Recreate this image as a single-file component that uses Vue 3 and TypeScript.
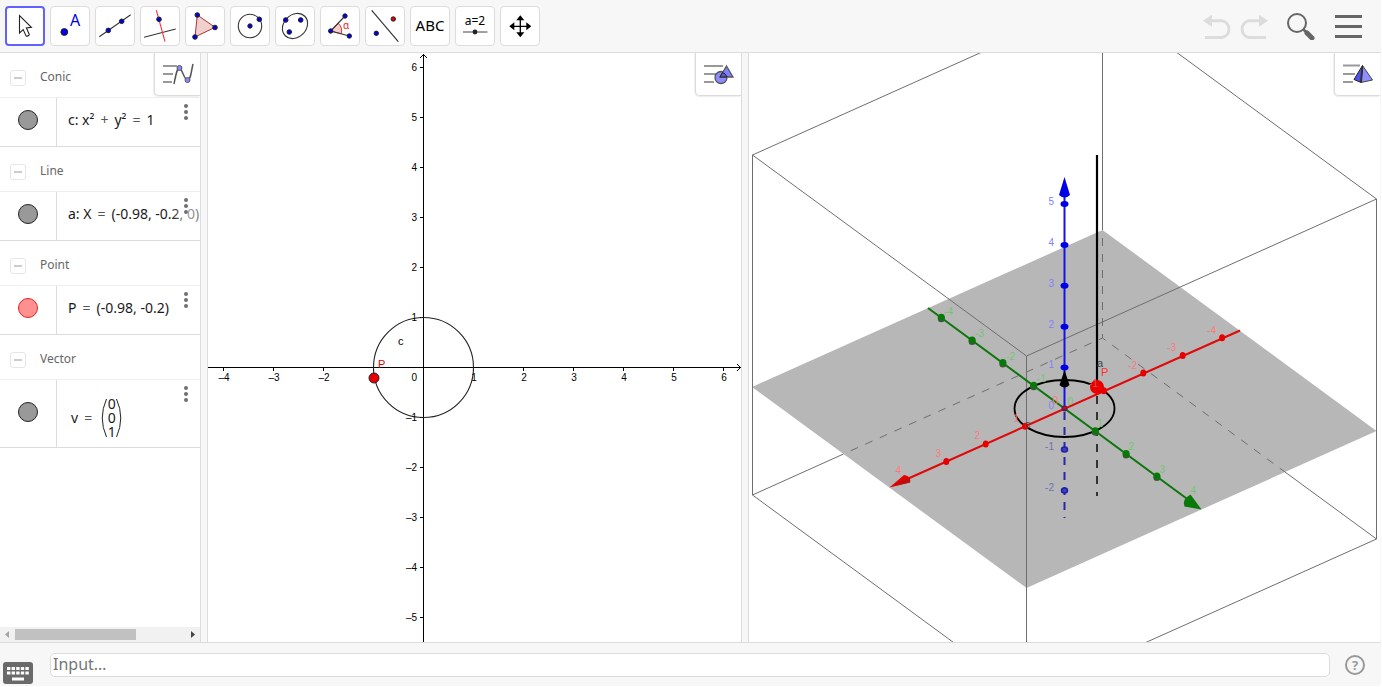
<script setup lang="ts">
import { ref } from 'vue'

interface Item {
  group: string
  kind: 'conic' | 'line' | 'point' | 'vector'
  name: string
  plus?: string
  value: string
}
interface Label {
  x: number
  y: number
  t: string
}
interface Dot {
  x: number
  y: number
}

const tools: string[] = [
  'Move', 'Point', 'Line', 'Perpendicular Line', 'Polygon', 'Circle with Centre',
  'Conic', 'Angle', 'Reflect about Line', 'Text', 'Slider', 'Move Graphics View',
]
const activeTool = ref<string>('Move')
const command = ref<string>('')

const items: Item[] = [
  { group: 'Conic', kind: 'conic', name: 'c: x²', plus: 'y²', value: '1' },
  { group: 'Line', kind: 'line', name: 'a: X', value: '(-0.98, -0.2, 0)' },
  { group: 'Point', kind: 'point', name: 'P', value: '(-0.98, -0.2)' },
  { group: 'Vector', kind: 'vector', name: 'v', value: '' },
]

const unit = 50
const origin: Dot = { x: 423, y: 367 }
const fmt = (n: number): string => (n < 0 ? `–${-n}` : `${n}`)
const xTicks: number[] = [-4, -3, -2, -1, 1, 2, 3, 4, 5, 6]
const yTicks: number[] = [-5, -4, -3, -2, -1, 1, 2, 3, 4, 5, 6]
const xLabels = xTicks.filter((n) => n !== -1)

const centre: Dot = { x: 1064.5, y: 408.5 }
const along = (n: number, dx: number, dy: number): Dot => ({ x: centre.x + n * dx, y: centre.y + n * dy })
const redDots: Dot[] = [-4, -3, -2, -1, 1, 2, 3].map((n) => along(n, -39.4, 17.7))
const greenDots: Dot[] = [-4, -3, -2, -1, 1, 2, 3].map((n) => along(n, 30.8, 22.7))
const blueDots: Dot[] = [1, 2, 3, 4, 5].map((n) => along(n, 0, -40.9))
const lowDots: Dot[] = [-1, -2].map((n) => along(n, 0, -41))

const blueLabels: Label[] = [
  { x: 1054, y: 205, t: '5' }, { x: 1054, y: 246, t: '4' }, { x: 1054, y: 287, t: '3' },
  { x: 1054, y: 328, t: '2' }, { x: 1054, y: 368, t: '1' }, { x: 1054, y: 409, t: '0' },
]
const lowLabels: Label[] = [{ x: 1054, y: 450, t: '-1' }, { x: 1054, y: 491, t: '-2' }]
const redLabels: Label[] = [
  { x: 901, y: 474, t: '4' }, { x: 941, y: 457, t: '3' }, { x: 980, y: 439, t: '2' },
  { x: 1019, y: 422, t: '1' }, { x: 1058, y: 404, t: '0' }, { x: 1137, y: 369, t: '-2' },
  { x: 1176, y: 351, t: '-3' }, { x: 1216, y: 334, t: '-4' },
]
const greenLabels: Label[] = [
  { x: 953, y: 315, t: '-4' }, { x: 984, y: 337, t: '-3' }, { x: 1015, y: 360, t: '-2' },
  { x: 1046, y: 382, t: '-1' }, { x: 1073, y: 405, t: '0' }, { x: 1103, y: 427, t: '1' },
  { x: 1134, y: 450, t: '2' }, { x: 1165, y: 473, t: '3' }, { x: 1196, y: 494, t: '4' },
]
</script>

<template>
  <div class="app">
    <header class="toolbar">
      <div class="tools">
        <button
          v-for="(tool, i) in tools"
          :key="tool"
          type="button"
          class="tool"
          :class="{ active: tool === activeTool }"
          :aria-label="tool"
          @click="activeTool = tool"
        >
          <svg class="tool-icon" viewBox="4 4 32 32" aria-hidden="true">
            <path v-if="i === 0" d="M14.5 9.5V27l3.7-3.4 2.7 6c.5 1.2 3.9 0 3.3-1.4l-2.8-6.3 5-.5z" fill="#fff" stroke="#222" stroke-width="1.1" />
            <g v-else-if="i === 1">
              <circle class="pt" cx="14.3" cy="26" r="3.4" />
              <text x="20" y="20" class="t-a">A</text>
            </g>
            <g v-else-if="i === 2">
              <path class="ln" d="M4.3 30.7L35.7 8.7" />
              <circle class="pt" cx="13.3" cy="24.4" r="2.3" /><circle class="pt" cx="26.7" cy="15.3" r="2.3" />
            </g>
            <g v-else-if="i === 3">
              <path class="ln" d="M4 31.3L35.7 23" /><path d="M16.3 4L25 35.7" stroke="#f33" stroke-width="1.1" />
              <circle class="pt" cx="19" cy="13.3" r="2.3" />
            </g>
            <g v-else-if="i === 4">
              <path d="M12.3 9L30 21.3 10 31z" fill="#efd0cc" stroke="#b03030" />
              <circle class="pt" cx="12.3" cy="9" r="2.3" /><circle class="pt" cx="30" cy="21.5" r="2.3" /><circle class="pt" cx="10" cy="31" r="2.3" />
            </g>
            <g v-else-if="i === 5">
              <circle class="ln" cx="20" cy="20" r="11.7" />
              <circle class="pt" cx="20" cy="20" r="2.2" /><circle class="pt" cx="29.3" cy="13.3" r="2.3" />
            </g>
            <g v-else-if="i === 6">
              <ellipse class="ln" cx="20" cy="20" rx="13.8" ry="11.2" transform="rotate(-45 20 20)" />
              <circle class="pt" cx="10.7" cy="14" r="2.3" /><circle class="pt" cx="25.7" cy="14" r="2.3" /><circle class="pt" cx="14.3" cy="26" r="2.3" />
            </g>
            <g v-else-if="i === 7">
              <path d="M10.7 25L18.2 17.2A10.8 10.8 0 0 1 21.2 27.8z" fill="#f6cfcc" stroke="#d33" />
              <path class="ln" d="M25 10L10.7 25l18.6 5" />
              <circle class="pt" cx="25" cy="10" r="2.2" /><circle class="pt" cx="10.7" cy="25" r="2.2" /><circle class="pt" cx="29.3" cy="30" r="2.2" />
              <text x="23" y="23" class="t-alpha">α</text>
            </g>
            <g v-else-if="i === 8">
              <path class="ln" d="M6.7 4.3L33.3 35.7" />
              <circle cx="28.3" cy="13" r="2.2" fill="#e00" stroke="#222" /><circle class="pt" cx="11.3" cy="27.3" r="2.2" />
            </g>
            <text v-else-if="i === 9" x="20" y="25" class="t-abc">ABC</text>
            <g v-else-if="i === 10">
              <text x="20" y="19" class="t-eq">a=2</text>
              <path d="M8 26H32.5" stroke="#444" /><circle cx="20" cy="26" r="2.4" fill="#222" />
            </g>
            <g v-else>
              <path d="M20.3 11V30M11 20.3H30" stroke="#000" stroke-width="1.3" />
              <path d="M20.3 9.3l4 5h-8zM20.3 31.3l4-5h-8zM9.3 20.3l5-4v8zM31.3 20.3l-5-4v8z" />
            </g>
          </svg>
        </button>
      </div>
      <div class="actions">
        <button type="button" class="plain" aria-label="Undo">
          <svg width="28" height="28" viewBox="1203 12 28 28"><path d="M1210 20.8H1222A8.5 8.5 0 0 1 1222 37.5H1205" fill="none" stroke="#dcdcdc" stroke-width="3" /><path d="M1203 20.8l9-6v12z" fill="#dcdcdc" /></svg>
        </button>
        <button type="button" class="plain" aria-label="Redo">
          <svg width="28" height="28" viewBox="1203 12 28 28"><g transform="translate(2434 0) scale(-1 1)"><path d="M1210 20.8H1222A8.5 8.5 0 0 1 1222 37.5H1205" fill="none" stroke="#dcdcdc" stroke-width="3" /><path d="M1203 20.8l9-6v12z" fill="#dcdcdc" /></g></svg>
        </button>
        <button type="button" class="plain search" aria-label="Search">
          <svg width="28" height="28" viewBox="0 -1 28 28" fill="none"><circle cx="10" cy="10" r="9" stroke="#666" stroke-width="2" /><path d="M16 16l4 4" stroke="#666" stroke-width="2.5" /><path d="M20 20l5 5" stroke="#666" stroke-width="5" stroke-linecap="round" /></svg>
        </button>
        <button type="button" class="plain" aria-label="Menu">
          <svg width="28" height="28" viewBox="0 0 28 28"><path d="M1 4.5H28M1 14.5H28M1 24.500H28" stroke="#666" stroke-width="3" /></svg>
        </button>
      </div>
    </header>

    <main class="views">
      <section class="algebra" aria-label="Algebra">
        <button type="button" class="stylebar" aria-label="Algebra style bar">
          <svg width="32" height="24" viewBox="162 62 32 24"><path d="M163 66H177M163 74H173M163 82H172" stroke="#999" stroke-width="2" /><path d="M174 84C176 74 177 68 179.5 68S184 80 187.5 80 191 72 193 64" fill="none" stroke="#555" stroke-width="1.5" /><circle cx="179.5" cy="68" r="2.500" fill="#88f" stroke="#555" /><circle cx="187.5" cy="80" r="2.5" fill="#88f" stroke="#555" /></svg>
        </button>
        <div class="list">
          <template v-for="item in items" :key="item.group">
            <div class="group">
              <button type="button" class="fold" :aria-label="'Collapse ' + item.group"><span class="dash"></span></button>
              <span class="group-name">{{ item.group }}</span>
            </div>
            <div class="row" :class="item.kind">
              <div class="toggle"><button type="button" class="marble" :aria-label="'Show ' + item.name"></button></div>
              <div class="expr">
                <span>{{ item.name }}</span>
                <template v-if="item.plus"><span class="op">+</span><span>{{ item.plus }}</span></template>
                <span class="op">=</span>
                <span v-if="item.value">{{ item.value }}</span>
                <span v-else class="matrix">
                  <svg class="paren" viewBox="0 0 6 40"><path d="M5.5 1Q-3 20 5.5 39" /></svg>
                  <span class="col"><span>0</span><span>0</span><span>1</span></span>
                  <svg class="paren" viewBox="0 0 6 40"><path d="M.5 1Q9 20 .5 39" /></svg>
                </span>
              </div>
              <button type="button" class="more" :aria-label="'Options ' + item.name"><i></i><i></i><i></i></button>
            </div>
          </template>
        </div>
        <div class="scroll" aria-hidden="true">
          <svg width="15" height="15"><path d="M9 4v7l-4-3.5z" fill="#a3a3a3" /></svg>
          <div class="track"><div class="thumb"></div></div>
          <svg width="15" height="15"><path d="M6 4v7l4-3.5z" fill="#444" /></svg>
        </div>
      </section>

      <div class="split"></div>

      <section class="pane" aria-label="Graphics">
        <svg class="canvas" viewBox="208 53 533 589" preserveAspectRatio="xMidYMid slice">
          <g stroke="#000" fill="none" shape-rendering="crispEdges">
            <path d="M208 367.5H741M423.5 54V642" />
            <path v-for="n in xTicks" :key="'x' + n" :d="`M${origin.x + n * unit + 0.5} 368v3`" />
            <path v-for="n in yTicks" :key="'y' + n" :d="`M420 ${origin.y - n * unit + 0.5}h3`" />
          </g>
          <path d="M420 58l3.5-3.5 3.5 3.5M737 364l3.5 3.5-3.5 3.5" fill="none" stroke="#000" />
          <circle cx="423.5" cy="367.5" r="50" fill="none" stroke="#222" stroke-width="1.1" />
          <g class="axis">
            <text v-for="n in xLabels" :key="'a' + n" :x="origin.x + n * unit + 1" y="381" text-anchor="middle">{{ fmt(n) }}</text>
            <text v-for="n in yTicks" :key="'b' + n" x="417" :y="origin.y - n * unit + 4" text-anchor="end">{{ fmt(n) }}</text>
            <text x="417" y="381" text-anchor="end">0</text>
          </g>
          <text class="name" x="398" y="345">c</text>
          <text class="name red" x="378" y="368">P</text>
          <circle cx="374" cy="378" r="5" fill="#e60000" stroke="#222" />
        </svg>
        <button type="button" class="stylebar" aria-label="Graphics style bar">
          <svg width="32" height="24" viewBox="703 62 32 24"><path d="M704 66H723M704 74H716M704 82H714" stroke="#999" stroke-width="2" /><circle cx="721" cy="77.5" r="6" fill="#8c8cff" stroke="#555" stroke-width="1.3" /><path d="M726.5 66l6.5 11h-13z" fill="#8080ff" stroke="#555" stroke-width="1.3" /><path d="M722.5 72.5Q726 73.500 727 77H720z" fill="#5c5cd0" stroke="#222" /></svg>
        </button>
      </section>

      <div class="split"></div>

      <section class="pane space" aria-label="3D Graphics">
        <svg class="canvas" viewBox="749 53 631 589" preserveAspectRatio="xMidYMid slice">
          <path d="M752 387L1102.5 230 1376.5 431 1026.5 588z" fill="#b7b7b7" />
          <g fill="none" stroke="#6e6e6e">
            <path d="M752.5 155L1102.5-2 1376.5 199M752.5 155V495L1026.5 696 1376.5 539V199M752.5 495L843.5 454M1376.5 539L1285 472M1102.5 53V230" />
            <path d="M1102.5 230V338" stroke-dasharray="8 8" stroke-dashoffset="-8" />
            <path d="M1102.5 338L843.5 454M1102.5 338L1285 472" stroke-dasharray="8 8" stroke-dashoffset="4" />
            <path d="M752.5 155L1026.5 356 1376.5 199M1026.5 356V642" />
          </g>
          <path d="M1064.500 412V518" stroke="#2727ac" stroke-width="2" stroke-dasharray="8 7" />
          <ellipse v-for="d in lowDots" :key="d.y" :cx="d.x" :cy="d.y" rx="3" ry="2.5" fill="#4040c0" stroke="#2020a8" stroke-width="1.5" />
          <path d="M1097 396V496" stroke="#333" stroke-width="2" stroke-dasharray="8 8" />
          <ellipse cx="1064.5" cy="408.5" rx="50" ry="28.5" fill="none" stroke="#000" stroke-width="1.8" />
          <path d="M1064.5 408V190" stroke="#1414e0" stroke-width="2" />
          <path d="M928 308L1190 501" stroke="#0c760c" stroke-width="2" />
          <path d="M1240 330.5L905 480" stroke="#e00808" stroke-width="2" />
          <ellipse v-for="d in blueDots" :key="'b' + d.y" :cx="d.x" :cy="d.y" rx="4" ry="3" fill="#0000e6" />
          <path d="M1064.5 177l5.500 18q-5.500 5-11 0z" fill="#0000e6" />
          <path d="M1064.5 370l5 15q-5 5-10 0z" fill="#000" />
          <g v-for="d in greenDots" :key="'g' + d.x">
            <circle :cx="d.x" :cy="d.y + 1" r="3.5" fill="#3d573d" /><circle :cx="d.x" :cy="d.y - 0.5" r="3.5" fill="#087808" />
          </g>
          <path d="M1201.500 509.5l-17-3q-3-7 6-12z" fill="#087808" />
          <ellipse v-for="d in redDots" :key="'r' + d.x" :cx="d.x" :cy="d.y" rx="3" ry="3.5" fill="#e60000" />
          <path d="M889.500 487.500l20.500-5q1-7-6-7.500z" fill="#e60000" />
          <path d="M892 486.500l18-4q1-3-1-5z" fill="#b81010" />
          <circle cx="1064.5" cy="408.5" r="3" fill="#502060" />
          <circle cx="1064.500" cy="408" r="1.500" fill="#e60000" />
          <path d="M1097 155V385" stroke="#000" stroke-width="2.2" />
          <circle cx="1097" cy="387" r="7" fill="#e60000" />
          <g class="tag">
            <text v-for="l in blueLabels" :key="'bl' + l.t" :x="l.x" :y="l.y" fill="#8080ff">{{ l.t }}</text>
            <text v-for="l in lowLabels" :key="'ll' + l.t" :x="l.x" :y="l.y" fill="#7070b8">{{ l.t }}</text>
            <text v-for="l in redLabels" :key="'rl' + l.t" :x="l.x" :y="l.y" fill="#ff7878">{{ l.t }}</text>
            <text v-for="l in greenLabels" :key="'gl' + l.t" :x="l.x" :y="l.y" fill="#74c474">{{ l.t }}</text>
            <text x="1098" y="387" fill="#f04848">-1</text>
          </g>
          <text class="name" x="1097" y="367" fill="#444">a</text>
          <text class="name" x="1025" y="428" fill="#444">c</text>
          <text class="name red-soft" x="1101" y="376">P</text>
        </svg>
        <button type="button" class="stylebar" aria-label="3D style bar">
          <svg width="32" height="24" viewBox="1342 62 32 24"><path d="M1343 65.500H1360M1343 74H1355M1343 82H1353" stroke="#999" stroke-width="2" /><path d="M1362.5 65.5L1372.5 80 1361 82.5z" fill="#8f8fff" stroke="#444" /><path d="M1362.5 65.5L1361 82.5 1354 79.5z" fill="#5050f0" stroke="#222" /><path d="M1362.3 67L1361 82" stroke="#333" stroke-width="2" /></svg>
        </button>
      </section>
    </main>

    <footer class="inputbar">
      <button type="button" class="keyboard" aria-label="Keyboard">
        <svg width="30" height="22" viewBox="0 0 30 22"><rect width="30" height="22" rx="3" fill="#6a6a6a" /><path d="M4 6.5H26M4 11H26" stroke="#fff" stroke-width="3" stroke-dasharray="3.4 1.2" /><path d="M9 17H21" stroke="#fff" stroke-width="3" /></svg>
      </button>
      <input v-model="command" type="text" class="command" aria-label="Input" placeholder="Input…" />
      <button type="button" class="help" aria-label="Help">?</button>
    </footer>
  </div>
</template>

<style>
body {
  margin: 0;
  background: #fff;
}
</style>

<style scoped>
* {
  box-sizing: border-box;
}
.app {
  height: calc(100vh - 1px);
  margin-right: 1px;
  display: flex;
  flex-direction: column;
  overflow: hidden;
  background: #f7f7f7;
  border-radius: 0 0 3px 3px;
  font-family: 'Noto Sans', 'Open Sans', sans-serif;
}
button {
  font: inherit;
  padding: 0;
  border: 0;
  background: none;
  cursor: pointer;
}
.toolbar {
  flex: none;
  display: flex;
  justify-content: space-between;
  align-items: center;
  height: 53px;
  padding: 0 19px 0 5px;
  border-bottom: 1px solid #dcdcdc;
}
.tools {
  display: flex;
  gap: 5px;
}
.tool {
  width: 40px;
  height: 40px;
  display: flex;
  align-items: center;
  justify-content: center;
  background: #fff;
  border: 1px solid #dcdcdc;
  border-radius: 4px;
}
.tool.active {
  border: 2px solid #6161ff;
}
.tool-icon {
  flex: none;
  width: 32px;
  height: 32px;
}
.pt {
  fill: #0000e6;
  stroke: #222;
  stroke-width: 1;
}
.ln {
  fill: none;
  stroke: #333;
  stroke-width: 1.1;
}
.t-a {
  font-size: 16px;
  fill: #0000e6;
}
.t-alpha {
  font-size: 10px;
  fill: #e22;
}
.t-abc {
  font-size: 15px;
  text-anchor: middle;
}
.t-eq {
  font-size: 12px;
  text-anchor: middle;
}
.actions {
  display: flex;
  gap: 9px;
}
.plain {
  display: flex;
}
.search {
  margin: 0 10px;
}
.views {
  flex: 1;
  min-height: 0;
  display: grid;
  grid-template-columns: 201px 6px minmax(0, 535fr) 6px minmax(0, 633fr);
}
.algebra {
  position: relative;
  display: flex;
  flex-direction: column;
  min-height: 0;
  overflow: hidden;
  background: #fff;
  border-right: 1px solid #dcdcdc;
}
.stylebar {
  position: absolute;
  top: 0;
  right: 0;
  z-index: 2;
  width: 46px;
  height: 43px;
  display: flex;
  align-items: center;
  justify-content: center;
  background: #fff;
  border: solid #dcdcdc;
  border-width: 0 0 1px 1px;
  border-radius: 0 0 0 5px;
  box-shadow: -1px 1px 1px #eee;
}
.list {
  flex: 1;
  min-height: 0;
}
.group {
  height: 45px;
  display: flex;
  align-items: center;
  gap: 14px;
  padding: 4px 0 0 10px;
  border-bottom: 1px solid #eee;
}
.fold {
  width: 16px;
  height: 16px;
  margin-top: 2px;
  display: flex;
  align-items: center;
  justify-content: center;
  border: 1px solid #e6e6e6;
  border-radius: 3px;
}
.dash {
  width: 8px;
  height: 2px;
  background: #ccc;
}
.group-name {
  font-size: 12px;
  line-height: 16px;
  color: #666;
}
.row {
  position: relative;
  display: flex;
  height: 49px;
  border-bottom: 1px solid #dcdcdc;
}
.row.vector {
  height: 68px;
}
.toggle {
  flex: none;
  width: 57px;
  display: flex;
  align-items: center;
  justify-content: center;
  padding-bottom: 4px;
  border-right: 1px solid #dcdcdc;
}
.marble {
  width: 20px;
  height: 20px;
  border: 1px solid #222;
  border-radius: 50%;
  background: #999;
}
.point .marble {
  border-color: #e62020;
  background: #ff9090;
}
.expr {
  display: flex;
  align-items: center;
  padding: 0 0 4px 11px;
  font-size: 14px;
  line-height: 20px;
  white-space: nowrap;
  color: #1a1a1a;
}
.vector .expr {
  padding: 8px 0 0 14px;
}
.op {
  margin: 0 6px;
  color: #555;
}
.matrix {
  display: flex;
  align-items: center;
  margin-left: 3px;
}
.paren {
  width: 6px;
  height: 40px;
  fill: none;
  stroke: #222;
}
.col {
  display: flex;
  flex-direction: column;
  align-items: center;
  width: 9px;
  line-height: 14px;
}
.more {
  position: absolute;
  top: 0;
  right: 0;
  width: 28px;
  height: 48px;
  display: flex;
  flex-direction: column;
  align-items: center;
  gap: 2px;
  padding-top: 6px;
  background: linear-gradient(to right, rgba(255, 255, 255, 0), rgba(255, 255, 255, 0.6) 14px, rgba(255, 255, 255, 0.4));
}
.more i {
  width: 4px;
  height: 4px;
  border-radius: 50%;
  background: #707070;
}
.scroll {
  flex: none;
  display: flex;
  height: 15px;
  background: #f1f1f1;
}
.track {
  flex: 1;
  padding: 2px 0;
}
.thumb {
  width: 71%;
  height: 11px;
  background: #c1c1c1;
}
.pane {
  position: relative;
  min-width: 0;
  min-height: 0;
  overflow: hidden;
  background: #fff;
  border: solid #dcdcdc;
  border-width: 0 1px;
}
.pane.space {
  border-right-color: #f7f7f7;
}
.canvas {
  display: block;
  width: 100%;
  height: 100%;
  font-family: 'Liberation Sans', Arial, sans-serif;
}
.axis {
  font-size: 10px;
}
.name {
  font-size: 11px;
}
.red {
  fill: #e60000;
}
.red-soft {
  fill: #f33;
}
.tag {
  font-size: 10px;
  text-anchor: end;
}
.inputbar {
  flex: none;
  display: flex;
  align-items: center;
  height: 44px;
  padding: 0 16px 0 3px;
  border-top: 1px solid #dcdcdc;
}
.keyboard {
  align-self: flex-end;
  display: flex;
  margin: 0 17px 2px 0;
}
.command {
  flex: 1;
  min-width: 0;
  height: 24px;
  padding: 0 2px 2px;
  border: 1px solid #dcdcdc;
  border-radius: 5px;
  background: #fff;
  font: 16px 'Noto Sans', 'Open Sans', sans-serif;
  color: #333;
}
.command::placeholder {
  color: #757575;
}
.help {
  width: 20px;
  height: 20px;
  margin-left: 15px;
  border: 2px solid #999;
  border-radius: 50%;
  font-size: 13px;
  font-weight: 700;
  line-height: 16px;
  color: #999;
}
</style>
